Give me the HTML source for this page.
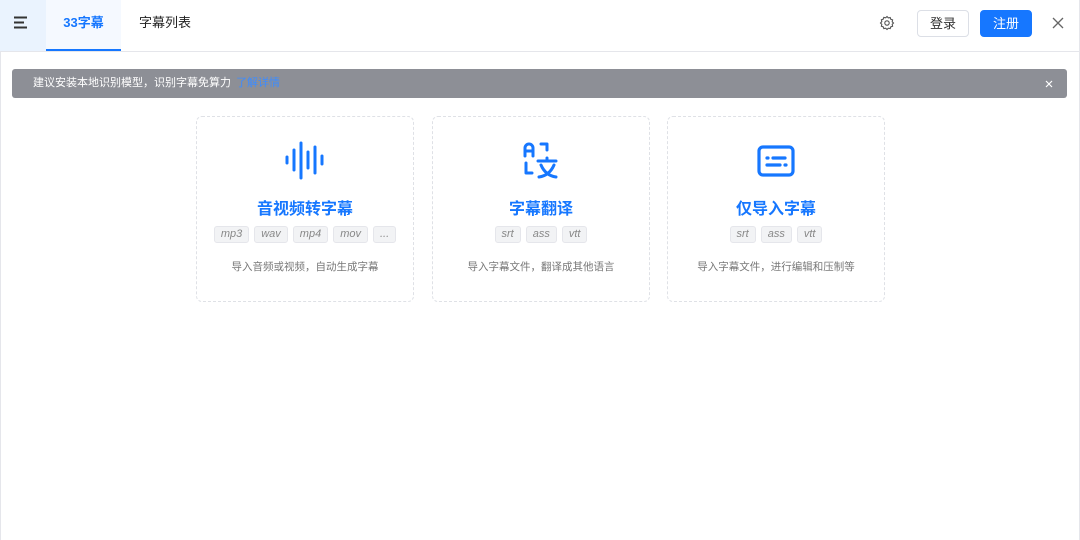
<!DOCTYPE html>
<html><head><meta charset="utf-8"><style>
*{margin:0;padding:0;box-sizing:border-box}
body{width:1080px;height:540px;background:#fff;font-family:"Liberation Sans","Noto Sans CJK SC",sans-serif;position:relative;overflow:hidden}
.edge{position:absolute;top:0;width:1px;height:540px;background:#e5e6eb}
.hdr{position:absolute;left:0;top:0;width:1080px;height:52px;border-bottom:1px solid #e5e6eb}
.menu{position:absolute;left:0;top:0;width:46px;height:51px;background:#eaf3fe}
.tab1{position:absolute;left:46px;top:0;width:75px;height:51px;background:#f5f9ff;color:#1677ff;font-size:13px;font-weight:bold;text-align:center;line-height:45px;border-bottom:2px solid #1677ff}
.tab2{position:absolute;left:139px;top:0;line-height:45px;font-size:13px;color:#222}
.btn{position:absolute;top:10px;height:27px;width:52px;border-radius:4px;font-size:13px;text-align:center;line-height:25px}
.banner{position:absolute;left:12px;top:69px;width:1055px;height:29px;background:#8d8f96;border-radius:3px;color:#fff;font-size:11px;line-height:29px;padding-left:21px}
.banner a{color:#3d8cff;margin-left:2px;text-decoration:none}
.card{position:absolute;top:116px;width:218px;height:186px;border:1px dashed #dfe1e6;border-radius:6px;text-align:center}
.title{position:absolute;top:78px;left:0;width:100%;font-size:16px;font-weight:bold;color:#1677ff}
.tags{position:absolute;top:109px;left:0;width:100%;display:flex;justify-content:center;gap:5px}
.tag{height:17px;padding:0 6px;background:#f2f3f5;border:1px solid #e5e6eb;border-radius:3px;font-size:11px;font-style:italic;color:#888;line-height:15px}
.desc{position:absolute;top:142px;left:0;width:100%;font-size:10.5px;color:#777}
.icon{position:absolute;left:50%;top:24px;transform:translateX(-50%)}
</style></head><body>
<div class="edge" style="left:0"></div><div class="edge" style="left:1079px"></div>
<div class="hdr">
<div class="menu"><svg width="46" height="51"><g stroke="#333" stroke-width="2"><line x1="14" y1="17.5" x2="27" y2="17.5"/><line x1="14" y1="22.5" x2="24" y2="22.5"/><line x1="14" y1="27.5" x2="27" y2="27.5"/></g></svg></div>
<div class="tab1">33字幕</div>
<div class="tab2">字幕列表</div>
<svg style="position:absolute;left:879px;top:15px" width="16" height="16" viewBox="0 0 16 16"><path d="M8 1.5l1.3 1.4 1.9-.4.6 1.8 1.8.6-.4 1.9L14.5 8l-1.3 1.3.4 1.9-1.8.6-.6 1.8-1.9-.4L8 14.5l-1.3-1.3-1.9.4-.6-1.8-1.8-.6.4-1.9L1.5 8l1.3-1.3-.4-1.9 1.8-.6.6-1.8 1.9.4z" fill="none" stroke="#555" stroke-width="1.1"/><circle cx="8" cy="8" r="2.2" fill="none" stroke="#555" stroke-width="1.1"/></svg>
<div class="btn" style="left:917px;border:1px solid #dcdfe6;color:#333">登录</div>
<div class="btn" style="left:980px;background:#1677ff;color:#fff;border:1px solid #1677ff">注册</div>
<svg style="position:absolute;left:1052px;top:17px" width="12" height="12"><path d="M1 1L11 11M11 1L1 11" stroke="#666" stroke-width="1.3"/></svg>
</div>
<div class="banner">建议安装本地识别模型，识别字幕免算力 <a>了解详情</a>
<svg style="position:absolute;right:14px;top:11px" width="8" height="8"><path d="M1 1L7 7M7 1L1 7" stroke="#fff" stroke-width="1.2"/></svg></div>

<div class="card" style="left:196px">
<svg class="icon" width="44" height="40" viewBox="0 0 44 40"><g stroke="#1677ff" stroke-width="3" stroke-linecap="round"><line x1="4" y1="16" x2="4" y2="22"/><line x1="11" y1="9" x2="11" y2="29"/><line x1="18" y1="2" x2="18" y2="37"/><line x1="25" y1="11" x2="25" y2="27"/><line x1="32" y1="6" x2="32" y2="32"/><line x1="39" y1="15" x2="39" y2="23"/></g></svg>
<div class="title">音视频转字幕</div>
<div class="tags"><span class="tag">mp3</span><span class="tag">wav</span><span class="tag">mp4</span><span class="tag">mov</span><span class="tag">...</span></div>
<div class="desc">导入音频或视频，自动生成字幕</div></div>

<div class="card" style="left:432px">
<svg class="icon" width="40" height="40" viewBox="0 0 40 40"><g fill="none" stroke="#1677ff" stroke-width="3" stroke-linecap="round" stroke-linejoin="round"><path d="M4 15V7a4 4 0 0 1 8 0v8M4 10h8"/><path d="M20 3h6v6"/><path d="M5 22v10h6"/><path d="M17 20h18M26 17v3M20 24c3 7 8 11 15 12M33 24c-3 7-8 11-15 12"/></g></svg>
<div class="title">字幕翻译</div>
<div class="tags"><span class="tag">srt</span><span class="tag">ass</span><span class="tag">vtt</span></div>
<div class="desc">导入字幕文件，翻译成其他语言</div></div>

<div class="card" style="left:667px">
<svg class="icon" width="40" height="40" viewBox="0 0 40 40"><g fill="none" stroke="#1677ff" stroke-width="3.2" stroke-linecap="round"><rect x="3" y="6" width="34" height="28" rx="4"/><line x1="11" y1="17" x2="12" y2="17"/><line x1="17" y1="17" x2="29" y2="17"/><line x1="11" y1="24" x2="24" y2="24"/><line x1="29" y1="24" x2="30" y2="24"/></g></svg>
<div class="title">仅导入字幕</div>
<div class="tags"><span class="tag">srt</span><span class="tag">ass</span><span class="tag">vtt</span></div>
<div class="desc">导入字幕文件，进行编辑和压制等</div></div>
</body></html>
